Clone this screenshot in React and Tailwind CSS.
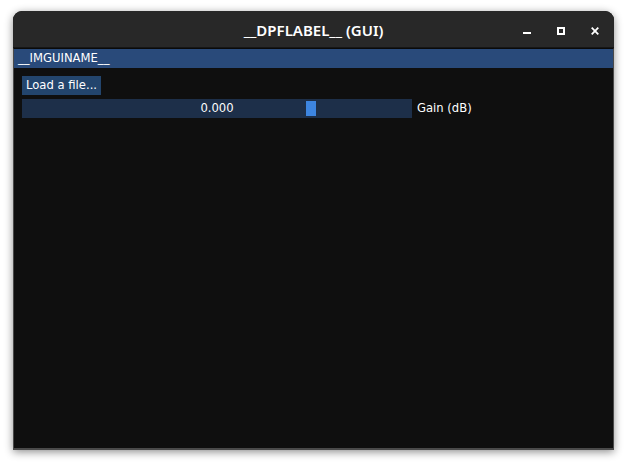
export default function App() {
  return (
    <div className="w-[628px] h-[466px] bg-white pt-[11px] pl-[13px]">
      <div className="w-[601px] h-[439px] flex flex-col rounded-t-[9px] overflow-hidden shadow-[0_2px_8px_rgba(0,0,0,0.45)] bg-[#0f0f0f]">
        {/* title bar */}
        <div className="h-[37px] shrink-0 bg-[#282828] grid grid-cols-[1fr_auto_1fr] items-center border-b border-[#161616]">
          <div />
          <div className="text-white text-[15px] font-semibold font-['Noto_Sans',sans-serif] pt-[2px]">
            __DPFLABEL__ (GUI)
          </div>
          <div className="flex justify-end items-center pr-[15px] gap-[26px] pt-[3px]">
            <svg width="8" height="8" viewBox="0 0 8 8">
              <rect x="0" y="5" width="8" height="2" fill="#fff" />
            </svg>
            <svg width="8" height="8" viewBox="0 0 8 8">
              <rect x="1" y="1" width="6" height="6" fill="none" stroke="#fff" strokeWidth="2" />
            </svg>
            <svg width="8" height="8" viewBox="0 0 8 8">
              <path d="M0.7 0.7L7.3 7.3M7.3 0.7L0.7 7.3" stroke="#fff" strokeWidth="1.8" />
            </svg>
          </div>
        </div>
        {/* client area */}
        <div className="flex-1 flex flex-col border-x border-b-2 border-[#4a4a4a] border-t border-t-[#0a0a0a] font-['DejaVu_Sans',sans-serif] text-[11.6px] text-white">
          <div className="h-[19px] bg-[#294a7a] flex items-center pl-[4px] leading-none">
            __IMGUINAME__
          </div>
          <div className="flex flex-col gap-[4px] pt-[8px] pl-[8px]">
            <div>
              <button className="h-[19px] px-[4px] bg-[#23456d] leading-none">
                Load a file...
              </button>
            </div>
            <div className="flex items-center gap-[5px]">
              <div className="relative w-[390px] h-[19px] bg-[#1d2f49] flex items-center justify-center leading-none">
                0.000
                <div className="absolute left-[284px] top-[2px] w-[10px] h-[15px] bg-[#3d85e0]" />
              </div>
              <span className="leading-none">Gain (dB)</span>
            </div>
          </div>
        </div>
      </div>
    </div>
  );
}
